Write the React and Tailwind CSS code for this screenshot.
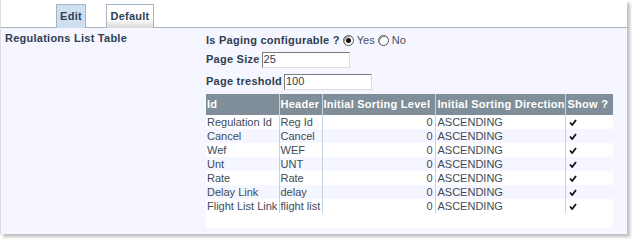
const rows = [
  ["Regulation Id", "Reg Id"],
  ["Cancel", "Cancel"],
  ["Wef", "WEF"],
  ["Unt", "UNT"],
  ["Rate", "Rate"],
  ["Delay Link", "delay"],
  ["Flight List Link", "flight list"],
];

function Check() {
  return (
    <svg width="8" height="7" viewBox="0 0 8 7" className="inline-block">
      <path d="M1 3.5 L3.2 6 L7 1" stroke="#111" strokeWidth="1.8" fill="none" />
    </svg>
  );
}

function Radio({ checked }) {
  return (
    <span className="inline-flex w-[11px] h-[11px] rounded-full border border-[#555] bg-white items-center justify-center shadow-[inset_1px_1px_0_#999]">
      {checked && <span className="w-[5px] h-[5px] rounded-full bg-[#111]" />}
    </span>
  );
}

export default function App() {
  return (
    <div className="w-[633px] h-[241px] bg-white font-['Liberation_Sans',Arial,sans-serif] text-[11px]">
      <div className="w-[627px] h-[234px] flex flex-col border-l border-[#dcdcdc] shadow-[3px_3px_3px_rgba(0,0,0,0.25)]">
        {/* tabs */}
        <div className="h-[28px] bg-white border-b border-[#a7b4c2] flex items-end pl-[55px] gap-[20px] tracking-[0.25px]">
          <div className="h-[24px] w-[30px] -mb-px bg-[#cfdff0] border border-[#a3b6c8] border-b-0 flex items-center justify-center font-bold text-[#2f4052]">
            Edit
          </div>
          <div className="h-[24px] w-[48px] -mb-px bg-gradient-to-b from-white from-60% to-[#d8d8d8] border border-[#a3b6c8] border-b-0 flex items-center justify-center font-bold text-[#2f4052]">
            Default
          </div>
        </div>

        <div className="flex-1 bg-[#f5f6ff] flex text-[#2f4052]">
          <div className="w-[205px] pl-[4px] pt-[4px] font-bold leading-[13px] tracking-[0.25px]">Regulations List Table</div>

          <div className="flex flex-col pt-[5px]">
            <div className="flex items-center h-[14px] gap-[3px]">
              <span className="font-bold tracking-[0.25px]">Is Paging configurable ?</span>
              <Radio checked />
              <span className="text-[#46525e]">Yes</span>
              <Radio />
              <span className="text-[#46525e]">No</span>
            </div>

            <div className="flex items-center h-[17px] mt-[4px] gap-[2px]">
              <span className="font-bold tracking-[0.25px]">Page Size</span>
              <input
                defaultValue="25"
                className="w-[88px] h-[16px] bg-white border border-[#7a7a7a] border-r-[#dcdcdc] border-b-[#dcdcdc] px-[1px] text-[11px] text-[#2f4052] outline-none"
              />
            </div>

            <div className="flex items-center h-[17px] mt-[5px] gap-[2px]">
              <span className="font-bold tracking-[0.25px]">Page treshold</span>
              <input
                defaultValue="100"
                className="w-[88px] h-[16px] bg-white border border-[#7a7a7a] border-r-[#dcdcdc] border-b-[#dcdcdc] px-[1px] text-[11px] text-[#2f4052] outline-none"
              />
            </div>

            <div className="mt-[4px] w-[407px] h-[134px] bg-white">
              <table className="w-[407px] table-fixed border-collapse">
                <colgroup>
                  <col className="w-[73px]" />
                  <col className="w-[43px]" />
                  <col className="w-[113px]" />
                  <col className="w-[130px]" />
                  <col className="w-[48px]" />
                </colgroup>
                <thead>
                  <tr className="h-[21px] bg-[#7f8e98] text-white font-bold text-left tracking-[0.25px]">
                    <th className="px-[1px] border-r border-[#c5d3e0]">Id</th>
                    <th className="px-[1px] border-r border-[#c5d3e0]">Header</th>
                    <th className="px-[1px] border-r border-[#c5d3e0] whitespace-nowrap">Initial Sorting Level</th>
                    <th className="px-[2px] border-r border-[#c5d3e0] whitespace-nowrap">Initial Sorting Direction</th>
                    <th className="px-[2px] whitespace-nowrap">Show ?</th>
                  </tr>
                </thead>
                <tbody className="text-[#3d4b58]">
                  {rows.map(([id, header], i) => (
                    <tr key={id} className={"h-[14px] leading-[13px] " + (i % 2 ? "bg-[#f5f6ff]" : "bg-white")}>
                      <td className="px-[1px] border-r border-[#c5d3e0] whitespace-nowrap">{id}</td>
                      <td className="px-[1px] border-r border-[#c5d3e0] whitespace-nowrap">{header}</td>
                      <td className="px-[2px] border-r border-[#c5d3e0] text-right">0</td>
                      <td className="px-[2px] border-r border-[#c5d3e0]">ASCENDING</td>
                      <td className="px-[3px]"><Check /></td>
                    </tr>
                  ))}
                </tbody>
              </table>
            </div>
          </div>
        </div>
      </div>
    </div>
  );
}
